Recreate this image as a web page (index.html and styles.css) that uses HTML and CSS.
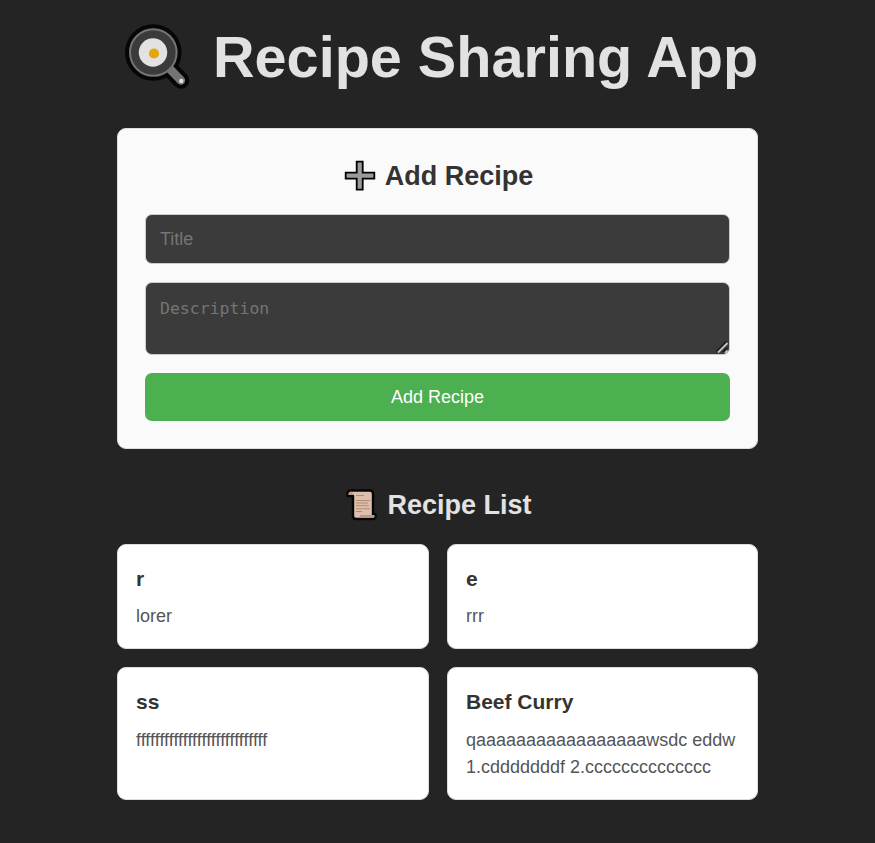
FILE: index.html
```html
<!DOCTYPE html>
<html lang="en">
<head>
<meta charset="utf-8">
<title>Recipe Sharing App</title>
<link rel="stylesheet" href="styles.css">
</head>
<body>
<main class="app">
  <h1 class="app-title">
    <svg class="pan" viewBox="0 0 66 66" aria-hidden="true">
      <path d="M43 43L56 56.500" stroke="#060606" stroke-width="16.500" stroke-linecap="round"/>
      <circle cx="28.300" cy="28.500" r="28.300" fill="#060606"/>
      <path d="M43 43L56 56.500" stroke="#747474" stroke-width="8.500" stroke-linecap="round"/>
      <circle cx="28.300" cy="28.500" r="23.300" fill="#3b3b3b" stroke="#747474" stroke-width="2"/>
      <circle cx="28" cy="28.500" r="14.200" fill="#e2e2e2"/>
      <circle cx="29" cy="29.500" r="5.100" fill="#e5a50a"/>
      <circle cx="56.300" cy="57" r="2.200" fill="#e2e2e2"/>
    </svg>
    <span>Recipe Sharing App</span>
  </h1>
  <form class="recipe-form">
    <h2 class="form-title">
      <svg class="plus" viewBox="0 0 32 32" aria-hidden="true">
        <path d="M12.7 1.7h6v10.9h11.6v6h-11.6v11.1h-6V18.600H1.700v-6h11z" fill="#9b9b9b" stroke="#000" stroke-width="1.8"/>
      </svg>
      <span>Add Recipe</span>
    </h2>
    <input class="field" type="text" placeholder="Title">
    <div class="description-wrap">
      <textarea class="field description" placeholder="Description"></textarea>
      <svg class="grip" viewBox="0 0 13 13" aria-hidden="true">
        <path d="M.5 10.500L10.500 .5M7 11L11 7" stroke="#1c1b20" stroke-width="1.800"/>
        <path d="M2 11.500L11.500 2M9 12L11.500 9.500" stroke="#c4c4c4" stroke-width="1.800"/>
      </svg>
    </div>
    <button class="submit" type="button">Add Recipe</button>
  </form>
  <h2 class="list-title">
    <svg class="scroll" viewBox="0 0 32 32" aria-hidden="true">
      <path d="M4.500 1.500H24Q27 1.500 27 5V25.500H29.500V28Q29 30 26.500 30H10Q7 30 7 27V7H1.500V4.500Q2 1.500 4.500 1.500Z" fill="#dcc0af" stroke="#060606" stroke-width="2.400" stroke-linejoin="round"/>
      <path d="M2.500 6V4.500Q3 2.500 5 2.500Q7 3 7.500 6Z" fill="#b99782"/>
      <path d="M12 29Q14 28 14 26H28.500V27.500Q28 29 26 29Z" fill="#b99782"/>
      <path d="M10 6.500h8M10 11.500h14M10 14h12M10 16.700h13M10 19.800h14M10 22.500h6" stroke="#b98b6c" stroke-width="1"/>
    </svg>
    <span>Recipe List</span>
  </h2>
  <section class="recipes">
    <article class="card"><h3>r</h3><p>lorer</p></article>
    <article class="card"><h3>e</h3><p>rrr</p></article>
    <article class="card"><h3>ss</h3><p>ffffffffffffffffffffffffffff</p></article>
    <article class="card"><h3>Beef Curry</h3><p>qaaaaaaaaaaaaaaaaawsdc eddw 1.cdddddddf 2.cccccccccccccc</p></article>
  </section>
</main>
</body>
</html>
```
FILE: styles.css
```css
* {
  box-sizing: border-box;
}

body {
  margin: 0;
  background: #242424;
  color: #e2e2e2;
  font: 18px/27px "Liberation Sans", Arial, sans-serif;
}

.app {
  width: 641px;
  margin: 0 auto;
}

h1, h2, h3, p {
  margin: 0;
}

.app-title {
  display: flex;
  align-items: center;
  height: 128px;
  padding: 0 0 15px 8px;
  gap: 22px;
  font-size: 57.6px;
  line-height: 64px;
  white-space: nowrap;
}

.pan {
  width: 66px;
  height: 66px;
  margin-top: 1px;
  flex: none;
}

.recipe-form {
  display: flex;
  flex-direction: column;
  height: 321px;
  padding: 27px;
  background: #fafafa;
  border: 1px solid #ddd;
  border-radius: 9px;
}

.form-title, .list-title {
  display: flex;
  align-items: center;
  justify-content: center;
  font-size: 27px;
  line-height: 40px;
}

.form-title {
  gap: 9px;
  margin-bottom: 18px;
  padding-left: 2px;
  color: #333;
}

.plus, .scroll {
  width: 32px;
  height: 32px;
  flex: none;
}

.field {
  display: block;
  width: 100%;
  height: 50px;
  margin: 0 0 18px;
  padding: 14px;
  background: #3b3b3b;
  color: #fff;
  border: 1px solid #ccc;
  border-radius: 7px;
  font: 18px "Liberation Sans", Arial, sans-serif;
}

.field::placeholder {
  color: #757575;
}

.description-wrap {
  position: relative;
}

.description {
  height: 73px;
  padding-top: 16px;
  font: 16.5px "DejaVu Sans Mono", monospace;
  resize: none;
}

.grip {
  position: absolute;
  right: 1px;
  bottom: 19px;
  width: 13px;
  height: 13px;
}

.submit {
  height: 48px;
  padding: 0;
  background: #4caf50;
  color: #fff;
  border: 0;
  border-radius: 7px;
  font: 18px "Liberation Sans", Arial, sans-serif;
}

.list-title {
  gap: 9px;
  margin: 36px 0 19px;
  padding-left: 3px;
}

.recipes {
  display: grid;
  grid-template-columns: 312px 311px;
  grid-template-rows: 105.3px 132.7px;
  gap: 18px;
}

.card {
  padding: 20px 18px 0;
  background: #fff;
  border: 1px solid #ddd;
  border-radius: 9px;
}

.card h3 {
  margin-bottom: 10.3px;
  color: #333;
  font-size: 21px;
  line-height: 28px;
}

.card p {
  color: #555;
}
```
